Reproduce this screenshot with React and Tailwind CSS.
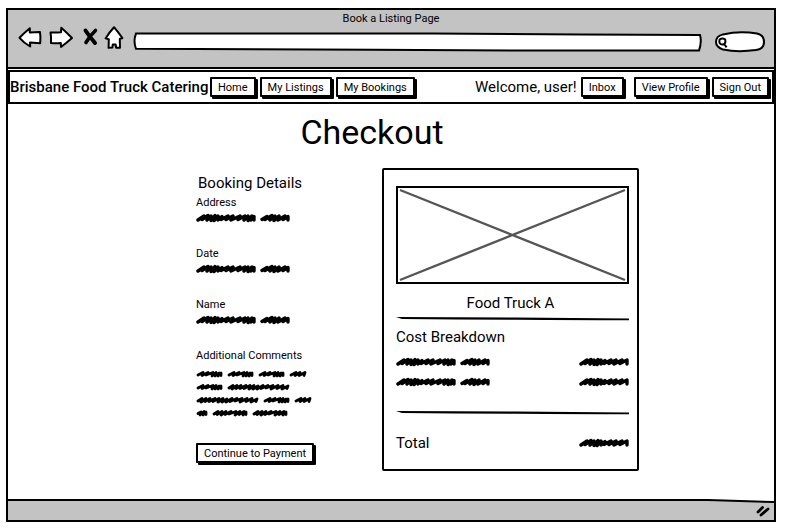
import React from "react";

const WORDS = {
  long: {
    width: 60,
    d: "M2 7 L8 3 L6 6.5 L12 2.5 L11 7 L15 3 L15 7.5 L19 2.5 L18 7.5 L22 3 L22 7 L26 3.5 L25 6.5 L32 3 L30 6.5 L37 3 L35 7 L44 3 L42 6.5 L49 3 L48 7 L52 3 L52 7.5 L56 3 L55 7 L58 3.5 L58 7",
  },
  amount: {
    width: 50,
    d: "M2 7 L8 3 L6 6.5 L12 2.5 L11 7 L15 3 L15 7.5 L19 2.5 L18 7.5 L22 3 L22 7 L26 3.5 L25 6.5 L32 3 L30 6.5 L37 3 L35 7 L43 3 L41 6.5 L48 3 L48 7",
  },
  medium: {
    width: 30,
    d: "M2 6.5 L7 3.5 L5 6.5 L12 2.5 L10 7 L15 3 L14 7.5 L19 3 L18 7 L25 3 L23 6.5 L28 3.5 L28 7",
  },
};

const SMALL_WORDS = {
  12: "M2 4.5 L5 3 L4 6 L8 2.5 L7 6 L10 3 L10 5.5",
  18: "M2 5 L7 2.5 L6 5.5 L11 2.5 L10 5.5 L16 2.5 L15 5.5",
  27: "M2 5 L7 2.5 L6 5.5 L12 2.5 L10 5 L17 2.5 L16 6 L20 2.5 L19 6 L23 3 L22 6 L25 3 L25 5.5",
  36: "M2 5 L6 2.5 L5 5.5 L10 2.5 L9 6 L14 2.5 L13 5.5 L19 2.5 L17 5 L24 2.5 L23 6 L28 2.5 L27 5.5 L32 2.5 L31 6 L34 3 L34 5.5",
  63: "M2 5 L6 2.5 L5 6 L10 2.5 L9 5.5 L14 2.5 L13 5.5 L19 2.5 L17 5.5 L23 2.5 L22 6 L27 2.5 L26 6 L31 3 L30 6 L36 2.5 L34 5.5 L41 2.5 L39 5 L46 2.5 L44 6 L51 2.5 L50 5.5 L56 2.5 L55 6 L61 3 L60 5.5",
};

function Scribble({ word }) {
  const { width, d } = WORDS[word];
  return (
    <svg width={width} height="10" viewBox={`0 0 ${width} 10`} fill="none" aria-hidden="true">
      <path d={d} stroke="black" strokeWidth="3.4" strokeLinecap="round" strokeLinejoin="round" />
    </svg>
  );
}

function SmallScribble({ width }) {
  return (
    <svg width={width} height="8" viewBox={`0 0 ${width} 8`} fill="none" aria-hidden="true">
      <path d={SMALL_WORDS[width]} stroke="black" strokeWidth="2.8" strokeLinecap="round" strokeLinejoin="round" />
    </svg>
  );
}

function SketchButton({ children }) {
  return (
    <button
      type="button"
      className="h-5 shrink-0 whitespace-nowrap rounded-[1px] border-2 border-black bg-white px-[6px] pt-px text-[11px] leading-4 shadow-[2px_2px_0_#000]"
    >
      {children}
    </button>
  );
}

function IconButton({ label, children }) {
  return (
    <button type="button" aria-label={label} className="shrink-0">
      {children}
    </button>
  );
}

function Toolbar() {
  return (
    <header className="border-b-2 border-black bg-[#c3c3c3]">
      <p className="h-4 pt-px text-center text-[11px] leading-4">Book a Listing Page</p>
      <div className="flex h-[41px] items-start pl-[10px] pr-2">
        <div className="flex items-center">
          <IconButton label="Back">
            <svg width="26" height="24" viewBox="0 0 26 24" fill="white" stroke="black" strokeWidth="2" strokeLinejoin="round">
              <path d="M1.5 11.8 Q6 7 11.8 2.2 L11.8 6.5 L22 6 Q22.8 11 22.2 17.2 L12 16.5 L12.2 20.5 Q6 17 1.5 11.8 Z" />
            </svg>
          </IconButton>
          <span className="w-1" />
          <IconButton label="Forward">
            <svg width="28" height="24" viewBox="0 0 28 24" fill="white" stroke="black" strokeWidth="2" strokeLinejoin="round">
              <path d="M2.5 6.5 Q7 6.8 13 6.2 L13.3 1.8 Q18 6 24 12 Q19 16.5 13 21 L12.8 17 Q8 17.6 3 17 Q3.4 11 2.5 6.5 Z" />
            </svg>
          </IconButton>
          <span className="w-1.5" />
          <IconButton label="Stop">
            <svg width="17" height="24" viewBox="0 0 17 24" fill="none" stroke="black" strokeLinecap="round">
              <path d="M3.5 4.5 Q6.5 9 13 17" strokeWidth="4" />
              <path d="M13.5 4.5 Q8.5 9 4 16.5" strokeWidth="3.6" />
            </svg>
          </IconButton>
          <span className="w-1" />
          <IconButton label="Home page">
            <svg width="21" height="24" viewBox="0 0 21 24" fill="white" stroke="black" strokeWidth="2" strokeLinejoin="round">
              <path d="M11 1.2 Q15 6 19.4 12 L16.8 13 L17 21.8 L13.2 21.8 L12.6 18.5 L9.8 18.5 L9.4 21.5 L5.6 21.8 L5.8 13.2 L2.6 12.4 Q6.5 6 11 1.2 Z" />
            </svg>
          </IconButton>
        </div>
        <div className="relative ml-[9px] mt-[6px] h-5 min-w-0 flex-1">
          <svg className="absolute inset-0 h-full w-full" viewBox="0 0 570 20" preserveAspectRatio="none" fill="white" stroke="black" strokeWidth="2" aria-hidden="true">
            <path d="M3 1.6 L150 1.4 L300 1.4 L450 2.4 L568 3 Q570 10 567 18.6 L400 18.6 L240 17.8 L3 16.8 Q0 9 3 1.6 Z" />
          </svg>
          <input aria-label="Web address" className="relative h-full w-full bg-transparent px-2 text-[11px] outline-none" />
        </div>
        <div className="relative ml-3 mt-[5px] h-[22px] w-[52px] shrink-0">
          <svg className="absolute inset-0" width="52" height="22" viewBox="0 0 52 22" fill="white" stroke="black" strokeWidth="2" aria-hidden="true">
            <path d="M9 3.4 Q26 -0.4 43 2.6 Q50 4 50 11 Q50 18 42 19 Q24 21.5 9 18.6 Q2 16 2 11 Q2 5 9 3.4 Z" />
            <path d="M5.6 8.5 Q8.5 6.5 11.2 8.5 Q12.2 13 8.6 13.6 Q4.4 13.4 5.6 8.5 Z M10.2 13 L12.6 16.4" fill="none" />
          </svg>
          <input type="search" aria-label="Search the web" className="relative h-full w-full appearance-none bg-transparent pl-4 pr-2 text-[11px] outline-none" />
        </div>
      </div>
    </header>
  );
}

function NavBar() {
  return (
    <nav className="mt-px flex items-center border-2 border-black py-[5px] pr-[3px]">
      <strong className="w-[200px] shrink-0 whitespace-nowrap text-[15px] font-medium leading-5">
        Brisbane Food Truck Catering
      </strong>
      <div className="flex gap-1">
        <SketchButton>Home</SketchButton>
        <SketchButton>My Listings</SketchButton>
        <SketchButton>My Bookings</SketchButton>
      </div>
      <div className="ml-auto flex items-center gap-1">
        <span className="whitespace-nowrap text-[15px] leading-5">Welcome, user!</span>
        <SketchButton>Inbox</SketchButton>
        <span className="w-0.5" />
        <SketchButton>View Profile</SketchButton>
        <SketchButton>Sign Out</SketchButton>
      </div>
    </nav>
  );
}

function Field({ label }) {
  return (
    <div>
      <dt className="text-[11px] leading-4">{label}</dt>
      <dd className="flex h-3 items-end gap-1">
        <Scribble word="long" />
        <Scribble word="medium" />
      </dd>
    </div>
  );
}

const COMMENT_LINES = [
  [27, 27, 27, 18],
  [27, 63],
  [63, 27, 18],
  [12, 36, 36],
];

function BookingDetails() {
  return (
    <section className="w-[186px] shrink-0 pt-[5px]">
      <h2 className="pl-0.5 text-[15px] leading-5">Booking Details</h2>
      <dl className="flex flex-col gap-[23px] pt-0.5">
        <Field label="Address" />
        <Field label="Date" />
        <Field label="Name" />
        <div>
          <dt className="text-[11px] leading-4">Additional Comments</dt>
          <dd className="flex flex-col gap-[5px] pt-[6px]">
            {COMMENT_LINES.map((line, i) => (
              <div key={i} className="flex gap-1">
                {line.map((width, j) => (
                  <SmallScribble key={j} width={width} />
                ))}
              </div>
            ))}
          </dd>
        </div>
      </dl>
      <div className="pt-[23px]">
        <SketchButton>Continue to Payment</SketchButton>
      </div>
    </section>
  );
}

function Divider() {
  return (
    <svg className="block h-1 w-full" viewBox="0 0 233 4" preserveAspectRatio="none" aria-hidden="true">
      <path d="M0 0 L60 0.2 L120 0.6 L233 1.6 L233 3.2 Q180 3.2 120 2.8 T6 2 Z" fill="black" />
    </svg>
  );
}

function CostRow() {
  return (
    <div className="flex items-center justify-between">
      <div className="flex gap-1">
        <Scribble word="long" />
        <Scribble word="medium" />
      </div>
      <Scribble word="amount" />
    </div>
  );
}

function OrderCard() {
  return (
    <section className="w-[257px] shrink-0 rounded-[2px] border-2 border-black pb-4 pl-3 pr-2 pt-4">
      <svg className="h-[98px] w-full" viewBox="0 0 233 98" fill="none" role="img" aria-label="Food truck photo">
        <rect x="1" y="1" width="231" height="96" stroke="black" strokeWidth="2" />
        <path d="M4 4 L229 94 M229 4 L4 94" stroke="#555" strokeWidth="2.4" />
      </svg>
      <h2 className="pb-1 pr-1 pt-[9px] text-center text-[15px] leading-5">Food Truck A</h2>
      <Divider />
      <h3 className="pt-1.5 text-[15px] leading-5">Cost Breakdown</h3>
      <div className="flex flex-col gap-[10px] pb-6 pt-[10px]">
        <CostRow />
        <CostRow />
      </div>
      <Divider />
      <div className="flex items-center justify-between pt-[18px]">
        <span className="text-[15px] leading-5">Total</span>
        <Scribble word="amount" />
      </div>
    </section>
  );
}

function StatusBar() {
  return (
    <footer className="relative h-[21px]">
      <svg className="absolute inset-0 h-full w-full" viewBox="0 0 766 21" preserveAspectRatio="none" aria-hidden="true">
        <path d="M0 1 L700 1 L766 3 L766 21 L0 21 Z" fill="#c3c3c3" />
        <path d="M0 1 L700 1 L766 3" fill="none" stroke="black" strokeWidth="2" />
      </svg>
      <svg className="absolute bottom-[3px] right-[3px] h-3 w-4" viewBox="0 0 16 12" stroke="black" strokeWidth="2.8" strokeLinecap="round" aria-hidden="true">
        <path d="M3 7 L7.5 2.5 M6 10 L13 4" />
      </svg>
    </footer>
  );
}

export default function App() {
  return (
    <div className="flex min-h-screen bg-white pb-[6px] pl-[6px] pr-[13px] pt-2 font-[Roboto,'Liberation_Sans',sans-serif] text-black">
      <div className="flex min-w-0 flex-1 flex-col border-2 border-black">
        <Toolbar />
        <NavBar />
        <main className="flex-1 pb-6">
          <h1 className="pr-[38px] pt-2 text-center text-[34px] leading-10">Checkout</h1>
          <div className="flex justify-center pl-[53px] pt-4">
            <BookingDetails />
            <OrderCard />
          </div>
        </main>
        <StatusBar />
      </div>
    </div>
  );
}
